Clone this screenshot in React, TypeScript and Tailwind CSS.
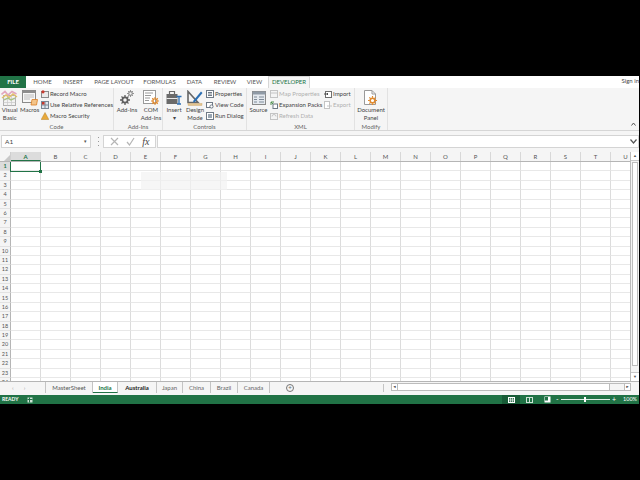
const font = "font-['Lato','Liberation_Sans',Arial,sans-serif]";

const columns = ["A", "B", "C", "D", "E", "F", "G", "H", "I", "J", "K", "L", "M", "N", "O", "P", "Q", "R", "S", "T", "U"];
const rows = Array.from({ length: 24 }, (_, i) => i + 1);
const tabs = ["HOME", "INSERT", "PAGE LAYOUT", "FORMULAS", "DATA", "REVIEW", "VIEW"];
const tabWidths = ["w-[25px]", "w-[36px]", "w-[46px]", "w-[45px]", "w-[25px]", "w-[36px]", "w-[23px]"];

function VisualBasicIcon() {
  return (
    <svg width="17" height="16" viewBox="0 0 17 16">
      <rect x="2.5" y="5.5" width="12" height="10" fill="#f2f2f2" stroke="#b0b0b0" />
      <path d="M2.5 9h12M2.5 12.5h12M6.5 5.5v10M10.5 5.5v10" stroke="#c8c8c8" strokeWidth="0.7" />
      <path d="M0.5 4.5 L4 1.5 L7 5 L11 1.5 L15.5 4" fill="none" stroke="#e2a6bd" strokeWidth="1.6" />
      <path d="M1 8 L5 5 L8 7.5 L12 4 L16 7" fill="none" stroke="#e3c06a" strokeWidth="1.4" />
      <path d="M3 10 L7 8 L10 10 L14 8" fill="none" stroke="#a5c07f" strokeWidth="1.2" />
    </svg>
  );
}

function MacrosIcon() {
  return (
    <svg width="16" height="16" viewBox="0 0 16 16">
      <rect x="0.5" y="0.5" width="13" height="12" fill="#f7f7f7" stroke="#8a8a8a" />
      <rect x="0.5" y="0.5" width="13" height="2.5" fill="#8d8d8d" />
      <path d="M2 5h10M2 7h10M2 9h6" stroke="#bbbbbb" />
      <path d="M9 15 L10 9.5 L15.5 9.5 L14.5 15 Z" fill="#f3c48a" stroke="#d97f26" strokeWidth="0.8" />
    </svg>
  );
}

function GearIcon({ size = 9, color = "#6b6b6b" }: { size?: number; color?: string }) {
  return (
    <svg width={size} height={size} viewBox="0 0 10 10" className="shrink-0">
      <circle cx="5" cy="5" r="2.6" fill="none" stroke={color} strokeWidth="1.7" />
      <path d="M5 0v2M5 8v2M0 5h2M8 5h2M1.5 1.5l1.4 1.4M7.1 7.1l1.4 1.4M1.5 8.5l1.4-1.4M7.1 2.9l1.4-1.4" stroke={color} strokeWidth="1.3" />
    </svg>
  );
}

function AddInsIcon() {
  return (
    <div className="relative h-[16px] w-[16px]">
      <div className="absolute left-[1px] top-[5px]"><GearIcon size={10} color="#5f5f5f" /></div>
      <div className="absolute left-[8px] top-[0px]"><GearIcon size={7} color="#8a8a8a" /></div>
    </div>
  );
}

function ComAddInsIcon() {
  return (
    <div className="relative h-[16px] w-[16px]">
      <svg width="13" height="14" viewBox="0 0 13 14" className="absolute left-0 top-0">
        <rect x="0.5" y="0.5" width="12" height="13" fill="#fff" stroke="#9a9a9a" />
        <path d="M2 3h8M2 5.5h6M2 8h5M2 10.5h4" stroke="#9a9a9a" />
      </svg>
      <div className="absolute left-[8px] top-[7px]"><GearIcon size={8} color="#e08a2e" /></div>
    </div>
  );
}

function InsertIcon() {
  return (
    <svg width="16" height="15" viewBox="0 0 16 15">
      <rect x="0.5" y="4" width="11" height="10" fill="#6a6a6a" />
      <path d="M3.5 4V1.5h5V4" fill="none" stroke="#6a6a6a" strokeWidth="1.2" />
      <rect x="0.5" y="8" width="11" height="1" fill="#e8e8e8" />
      <path d="M10.5 6.5h5M13 6.5v7.5M11 14h4" stroke="#2c6fb3" strokeWidth="1.3" fill="none" />
    </svg>
  );
}

function DesignModeIcon() {
  return (
    <svg width="16" height="16" viewBox="0 0 16 16">
      <path d="M1 1.5v11h10z" fill="none" stroke="#666" strokeWidth="1.6" />
      <path d="M6.5 10.5 L14 1.5 L15.5 3 L8 12 L6 12.5 Z" fill="#2c6fb3" />
      <rect x="1" y="13.5" width="14" height="2" fill="#e3c48d" stroke="#c9a36a" strokeWidth="0.4" />
    </svg>
  );
}

function SourceIcon() {
  return (
    <svg width="14" height="14" viewBox="0 0 14 14">
      <rect x="0.5" y="0.5" width="13" height="13" fill="#e4e9ef" stroke="#8a8a8a" />
      <rect x="0.5" y="0.5" width="13" height="3" fill="#8f9aa6" />
      <path d="M2 6h3M2 8.5h3M2 11h3M7 6h5M7 8.5h5M7 11h5" stroke="#7f8b98" />
    </svg>
  );
}

function DocumentPanelIcon() {
  return (
    <div className="relative h-[16px] w-[16px]">
      <svg width="12" height="15" viewBox="0 0 12 15" className="absolute left-[1px] top-0">
        <path d="M0.5 0.5H8L11.5 4V14.5H0.5Z" fill="#fff" stroke="#9a9a9a" />
        <path d="M8 0.5V4H11.5" fill="none" stroke="#9a9a9a" />
      </svg>
      <div className="absolute left-[5px] top-[6px]"><GearIcon size={9} color="#e08a2e" /></div>
    </div>
  );
}

function SmallIcon({ kind, faded }: { kind: "macro" | "relative" | "warn" | "props" | "code" | "dialog" | "map" | "expand" | "refresh" | "import" | "export"; faded?: boolean }) {
  const stroke = faded ? "#c4c4c4" : "#6f7a86";
  return (
    <svg width="8" height="8" viewBox="0 0 8 8" className="shrink-0">
      {kind === "macro" && (
        <>
          <rect x="0.5" y="1.5" width="7" height="6" fill="#e9e9e9" stroke="#8a8a8a" />
          <circle cx="2" cy="1.8" r="1.6" fill="#c8382c" />
        </>
      )}
      {kind === "relative" && (
        <>
          <rect x="0.5" y="0.5" width="7" height="7" fill="#dfe6ee" stroke="#7a8794" />
          <path d="M0.5 4h7M4 0.5v7" stroke="#7a8794" />
          <rect x="1" y="1" width="2.5" height="2.5" fill="#c8382c" />
        </>
      )}
      {kind === "warn" && <path d="M4 0.5 L7.8 7.5 H0.2 Z" fill="#e8a93a" stroke="#b9822a" strokeWidth="0.5" />}
      {kind === "props" && (
        <>
          <rect x="0.5" y="0.5" width="7" height="7" fill="#fff" stroke={stroke} />
          <path d="M2 2.5h4M2 4h4M2 5.5h4" stroke={stroke} />
        </>
      )}
      {kind === "code" && (
        <>
          <rect x="0.5" y="1.5" width="6" height="5" fill="#fff" stroke={stroke} />
          <circle cx="5.5" cy="5.5" r="1.6" fill="#fff" stroke={stroke} />
        </>
      )}
      {kind === "dialog" && (
        <>
          <rect x="0.5" y="0.5" width="7" height="7" fill="#fff" stroke={stroke} />
          <rect x="2" y="2" width="4" height="4" fill="#9aa6b2" />
        </>
      )}
      {kind === "map" && (
        <>
          <rect x="0.5" y="0.5" width="7" height="7" fill="#f4f4f4" stroke={stroke} />
          <path d="M0.5 3h7" stroke={stroke} />
        </>
      )}
      {kind === "expand" && (
        <>
          <rect x="3" y="3" width="4.5" height="4.5" fill="#fff" stroke={stroke} />
          <path d="M1 1l2 2M1 4V1h3" fill="none" stroke="#4f8f4f" />
        </>
      )}
      {kind === "refresh" && (
        <>
          <rect x="0.5" y="1.5" width="7" height="6" fill="#f4f4f4" stroke={stroke} />
          <path d="M2 4.5a2 2 0 1 1 4 0" fill="none" stroke={stroke} />
        </>
      )}
      {kind === "import" && (
        <>
          <rect x="1.5" y="1.5" width="6" height="6" fill="#fff" stroke="#6f6f6f" />
          <path d="M0 4h4M3 3l1 1-1 1" fill="none" stroke="#4b4b4b" />
        </>
      )}
      {kind === "export" && (
        <>
          <rect x="0.5" y="0.5" width="5" height="7" fill="#fff" stroke={stroke} />
          <path d="M3 5h5" stroke={stroke} />
        </>
      )}
    </svg>
  );
}

function BigButton({ icon, label, width }: { icon: React.ReactNode; label: string[]; width: string }) {
  return (
    <div className={`flex flex-col items-center ${width}`}>
      <div className="mt-[1px] flex h-[17px] items-center justify-center">{icon}</div>
      <div className="whitespace-nowrap text-center text-[6px] leading-[8px] text-[#444]">
        {label.map((line) => (
          <div key={line}>{line}</div>
        ))}
      </div>
    </div>
  );
}

function SmallButton({ kind, label, faded }: { kind: React.ComponentProps<typeof SmallIcon>["kind"]; label: string; faded?: boolean }) {
  return (
    <div className={`flex h-[11px] items-center gap-[1px] whitespace-nowrap text-[6px] ${faded ? "text-[#b0b0b0]" : "text-[#444]"}`}>
      <SmallIcon kind={kind} faded={faded} />
      {label}
    </div>
  );
}

function Group({ label, width, children }: { label: string; width: string; children: React.ReactNode }) {
  return (
    <div className={`flex h-full shrink-0 flex-col border-r border-[#e2e2e2] ${width}`}>
      <div className="flex h-[33px] items-start">{children}</div>
      <div className="mt-auto text-center text-[6px] leading-[7px] text-[#666]">{label}</div>
    </div>
  );
}

function SmallStack({ children, className = "" }: { children: React.ReactNode; className?: string }) {
  return <div className={`flex flex-col ${className}`}>{children}</div>;
}

function FormulaBar() {
  return (
    <div className="flex h-[21px] shrink-0 items-center bg-[#f5f5f5]">
      <div className="ml-[1px] flex h-[13px] w-[90px] items-center justify-between border border-[#d4d4d4] bg-white px-[3px] text-[6.5px] text-[#444]">
        <span>A1</span>
        <span className="text-[5px] text-[#555]">▾</span>
      </div>
      <div className="ml-[5px] flex h-[9px] w-[4px] flex-col items-center justify-between">
        <span className="h-[1px] w-[1px] bg-[#999]" />
        <span className="h-[1px] w-[1px] bg-[#999]" />
        <span className="h-[1px] w-[1px] bg-[#999]" />
      </div>
      <div className="ml-[3px] flex h-[13px] w-[53px] items-center justify-around border border-[#d4d4d4] bg-white px-[2px]">
        <svg width="9" height="9" viewBox="0 0 9 9"><path d="M1 1l7 7M8 1L1 8" stroke="#b5b5b5" strokeWidth="1.2" /></svg>
        <svg width="9" height="9" viewBox="0 0 9 9"><path d="M1 5l2.5 3L8 1" fill="none" stroke="#b5b5b5" strokeWidth="1.2" /></svg>
        <span className="font-['Liberation_Serif',serif] text-[10px] italic leading-[9px] text-[#444]">fx</span>
      </div>
      <div className="ml-[1px] flex h-[13px] flex-1 items-center justify-end border border-[#d4d4d4] bg-white pr-[1px]">
        <svg width="7" height="5" viewBox="0 0 7 5"><path d="M0.5 0.5L3.5 4l3-3.5" fill="none" stroke="#555" strokeWidth="1.2" /></svg>
      </div>
    </div>
  );
}

function Sheet() {
  return (
    <div className="relative flex min-h-0 flex-1 overflow-hidden bg-white">
      <div className="flex min-w-0 flex-1 flex-col">
        <div className="flex h-[10px] shrink-0 border-b border-[#b5b5b5] bg-[#f5f5f5]">
          <div className="flex w-[11px] shrink-0 items-end justify-end border-r border-[#cfcfcf]">
            <span className="border-b-[6px] border-l-[6px] border-b-[#c8c8c8] border-l-transparent" />
          </div>
          {columns.map((c, i) => (
            <div
              key={c}
              className={`flex w-[30px] shrink-0 items-center justify-center border-r border-[#d8d8d8] text-[6px] ${
                i === 0 ? "border-b border-b-[#217346] bg-[#dcdcdc] font-bold text-[#217346]" : "text-[#555]"
              }`}
            >
              {c}
            </div>
          ))}
        </div>
        <div className="relative flex min-h-0 flex-1 flex-col overflow-hidden">
          {rows.map((r, i) => (
            <div key={r} className="flex h-[9.4px] shrink-0">
              <div
                className={`flex w-[11px] shrink-0 items-center justify-center border-b border-r border-b-[#e2e2e2] border-r-[#b5b5b5] text-[5.5px] ${
                  i === 0 ? "bg-[#dcdcdc] font-bold text-[#217346]" : "bg-[#f5f5f5] text-[#555]"
                }`}
              >
                {r}
              </div>
              {columns.map((c) => (
                <div key={c} className="w-[30px] shrink-0 border-b border-r border-b-[#e8e8e8] border-r-[#dcdcdc]" />
              ))}
            </div>
          ))}
          <div className="absolute left-[10px] top-[-1px] h-[11px] w-[31px] border-[1.5px] border-[#217346]" />
          <div className="absolute left-[39px] top-[8px] h-[3px] w-[3px] bg-[#217346]" />
          <div className="absolute left-[141px] top-[10px] h-[18px] w-[86px] bg-[#f2f2f2] opacity-70" />
        </div>
      </div>
      <div className="flex w-[9px] shrink-0 flex-col border-l border-[#bcbcbc] bg-[#f5f5f5]">
        <div className="flex h-[9px] items-center justify-center border-b border-[#c8c8c8] bg-white text-[4px] text-[#555]">▲</div>
        <div className="mx-[1px] mt-[1px] h-[204px] border border-[#bdbdbd] bg-white" />
        <div className="mt-auto flex h-[9px] items-center justify-center border-t border-[#c8c8c8] bg-white text-[4px] text-[#555]">▼</div>
      </div>
    </div>
  );
}

function SheetTabs() {
  const sheets = [
    { name: "MasterSheet", cls: "w-[47px] text-[#555]" },
    { name: "India", cls: "w-[25px] border-b border-b-[#217346] bg-white font-bold text-[#217346]" },
    { name: "Australia", cls: "w-[39px] font-bold text-[#222]" },
    { name: "Japan", cls: "w-[26px] text-[#666]" },
    { name: "China", cls: "w-[28px] text-[#666]" },
    { name: "Brazil", cls: "w-[27px] text-[#666]" },
    { name: "Canada", cls: "w-[32px] text-[#666]" },
  ];
  return (
    <div className="flex h-[14px] shrink-0 items-start border-t border-[#b5b5b5] bg-[#f5f5f5]">
      <div className="flex h-[11px] w-[46px] shrink-0 items-center gap-[10px] border-r border-[#c4c4c4] pl-[12px] text-[6px] leading-[8px] text-[#aaa]">
        <span>‹</span>
        <span>›</span>
      </div>
      {sheets.map((s) => (
        <div key={s.name} className={`flex h-[11px] shrink-0 items-center justify-center border-r border-[#c4c4c4] text-[6px] ${s.cls}`}>
          {s.name}
        </div>
      ))}
      <div className="ml-[16px] mt-[2px] flex h-[8px] w-[8px] shrink-0 items-center justify-center rounded-full border border-[#777] text-[6px] leading-[6px] text-[#666]">+</div>
      <div className="ml-[89px] mt-[2px] h-[8px] w-[1px] shrink-0 bg-[#c4c4c4]" />
      <div className="ml-[7px] mt-[1px] flex h-[8px] w-[240px] shrink-0 items-center border-y border-[#bcbcbc]">
        <div className="flex h-full w-[7px] items-center justify-center border-x border-[#bcbcbc] bg-white text-[4px] text-[#444]">◄</div>
        <div className="h-full w-[212px] border-r border-[#bcbcbc] bg-white" />
        <div className="flex-1" />
        <div className="flex h-full w-[7px] items-center justify-center border-x border-[#bcbcbc] bg-white text-[4px] text-[#444]">►</div>
      </div>
    </div>
  );
}

function StatusBar() {
  return (
    <div className="flex h-[9px] shrink-0 items-center bg-[#217346] text-white">
      <span className="ml-[2px] w-[25px] text-[5px] font-bold">READY</span>
      <svg width="6" height="6" viewBox="0 0 6 6"><rect x="0.5" y="0.5" width="5" height="5" fill="#cfe3d7" /><path d="M0.5 2.5h5M2.5 0.5v5" stroke="#217346" /></svg>
      <div className="ml-auto flex h-full items-center">
        <div className="flex h-full w-[18px] items-center justify-center bg-[#185c37]">
          <svg width="7" height="6" viewBox="0 0 7 6"><rect x="0.5" y="0.5" width="6" height="5" fill="none" stroke="#fff" /><path d="M0.5 2.2h6M0.5 3.8h6M2.5 0.5v5M4.5 0.5v5" stroke="#fff" strokeWidth="0.6" /></svg>
        </div>
        <div className="flex h-full w-[18px] items-center justify-center">
          <svg width="7" height="6" viewBox="0 0 7 6"><rect x="0.5" y="0.5" width="6" height="5" fill="none" stroke="#cfe3d7" /><path d="M3.5 0.5v5" stroke="#cfe3d7" /></svg>
        </div>
        <div className="flex h-full w-[18px] items-center justify-center">
          <svg width="7" height="7" viewBox="0 0 7 7"><rect x="0.5" y="0.5" width="6" height="6" fill="#fff" /><rect x="1" y="1" width="3" height="3.5" fill="#217346" /></svg>
        </div>
        <div className="mr-[2px] flex w-[60px] items-center gap-[2px] text-[7px] leading-[7px]">
          <span>-</span>
          <div className="relative h-[1px] flex-1 bg-[#dfeee6]">
            <span className="absolute left-[23px] top-[-2px] h-[5px] w-[2px] bg-white" />
          </div>
          <span>+</span>
        </div>
        <span className="ml-[5px] mr-[2px] whitespace-nowrap text-[5.5px]">100%</span>
      </div>
    </div>
  );
}

export default function App() {
  return (
    <div className={`flex h-[480px] w-[640px] flex-col overflow-hidden bg-black pt-[76px] ${font}`}>
      <div className="flex h-[328px] w-[639px] flex-col bg-white">
        {/* Tabs */}
        <div className="flex h-[12px] shrink-0 items-stretch bg-white text-[6px] leading-[10px] text-[#555]">
          <div className="flex w-[26px] items-center justify-center bg-[#217346] pb-[1px] font-bold text-white">FILE</div>
          <div className="w-[4px]" />
          {tabs.map((t, i) => (
            <div key={t} className={`flex items-center justify-center pb-[1px] ${tabWidths[i]}`}>
              {t}
            </div>
          ))}
          <div className="ml-[2px] flex w-[42px] items-center justify-center border-x border-t border-[#d6d6d6] bg-[#f5f5f5] pb-[1px] text-[#217346]">DEVELOPER</div>
          <div className="ml-auto flex items-center pb-[2px] text-[#444]">Sign in</div>
        </div>

        {/* Ribbon */}
        <div className="flex h-[43px] shrink-0 border-b border-[#d6d6d6] bg-[#f5f5f5]">
          <Group label="Code" width="w-[114px]">
            <BigButton icon={<VisualBasicIcon />} label={["Visual", "Basic"]} width="w-[20px]" />
            <BigButton icon={<MacrosIcon />} label={["Macros"]} width="w-[21px]" />
            <SmallStack className="ml-[1px]">
              <SmallButton kind="macro" label="Record Macro" />
              <SmallButton kind="relative" label="Use Relative References" />
              <SmallButton kind="warn" label="Macro Security" />
            </SmallStack>
          </Group>
          <Group label="Add-Ins" width="w-[49px]">
            <BigButton icon={<AddInsIcon />} label={["Add-Ins"]} width="w-[26px]" />
            <BigButton icon={<ComAddInsIcon />} label={["COM", "Add-Ins"]} width="w-[22px]" />
          </Group>
          <Group label="Controls" width="w-[84px]">
            <BigButton icon={<InsertIcon />} label={["Insert", "▾"]} width="w-[22px]" />
            <BigButton icon={<DesignModeIcon />} label={["Design", "Mode"]} width="w-[20px]" />
            <SmallStack className="ml-[1px]">
              <SmallButton kind="props" label="Properties" />
              <SmallButton kind="code" label="View Code" />
              <SmallButton kind="dialog" label="Run Dialog" />
            </SmallStack>
          </Group>
          <Group label="XML" width="w-[108px]">
            <BigButton icon={<SourceIcon />} label={["Source"]} width="w-[23px]" />
            <SmallStack className="w-[54px]">
              <SmallButton kind="map" label="Map Properties" faded />
              <SmallButton kind="expand" label="Expansion Packs" />
              <SmallButton kind="refresh" label="Refresh Data" faded />
            </SmallStack>
            <SmallStack>
              <SmallButton kind="import" label="Import" />
              <SmallButton kind="export" label="Export" faded />
            </SmallStack>
          </Group>
          <Group label="Modify" width="w-[33px]">
            <BigButton icon={<DocumentPanelIcon />} label={["Document", "Panel"]} width="w-full" />
          </Group>
          <div className="ml-auto flex items-end pb-[4px] pr-[3px]">
            <svg width="5" height="4" viewBox="0 0 5 4"><path d="M0.5 3.5L2.5 1l2 2.5" fill="none" stroke="#555" /></svg>
          </div>
        </div>

        <FormulaBar />
        <Sheet />
        <SheetTabs />
        <StatusBar />
      </div>
    </div>
  );
}
